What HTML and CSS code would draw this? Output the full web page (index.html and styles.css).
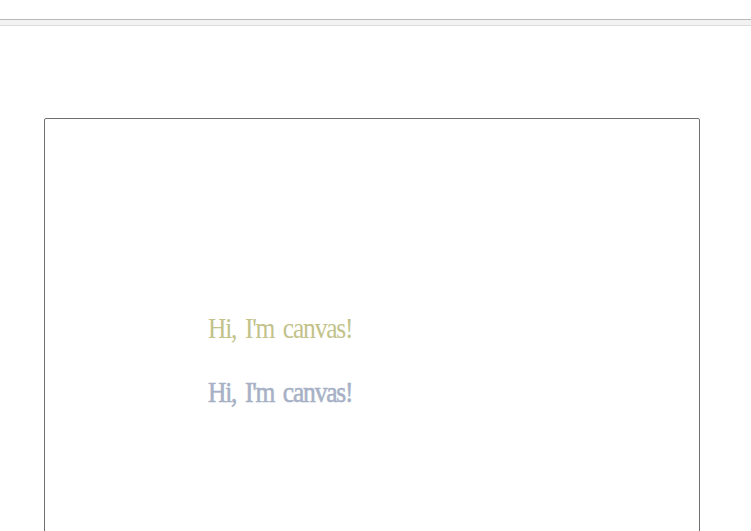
FILE: index.html
```html
<!DOCTYPE html>
<html>
<head>
<meta charset="utf-8">
<link rel="stylesheet" href="styles.css">
</head>
<body>
<div class="topbar"></div>
<div class="canvas-box">
  <div class="line line-a">Hi, I'm canvas!</div>
  <div class="line line-b">Hi, I'm canvas!</div>
</div>
</body>
</html>
```
FILE: styles.css
```css
html, body {
  margin: 0;
  padding: 0;
  background: #ffffff;
  overflow: hidden;
}
.topbar {
  margin-top: 19px;
  height: 5px;
  background: #f2f2f2;
  border-top: 1px solid #b8b8b8;
  border-bottom: 1px solid #dcdcdc;
}
.canvas-box {
  margin: 92px 0 0 44px;
  width: 656px;
  height: 500px;
  border: 1px solid #6e6e6e;
  border-radius: 2px;
  padding: 194px 0 0 163px;
  box-sizing: border-box;
}
.line {
  font-family: "Liberation Serif", "Times New Roman", serif;
  font-size: 30px;
  line-height: 30px;
  letter-spacing: -1.4px;
  word-spacing: 4px;
  white-space: nowrap;
  transform: scaleX(0.85);
  transform-origin: 0 0;
  width: max-content;
}
.line-a {
  color: #c2c28a;
}
.line-b {
  margin-top: 34px;
  color: #a7b1c6;
  -webkit-text-stroke: 0.6px #a7b1c6;
}
```
